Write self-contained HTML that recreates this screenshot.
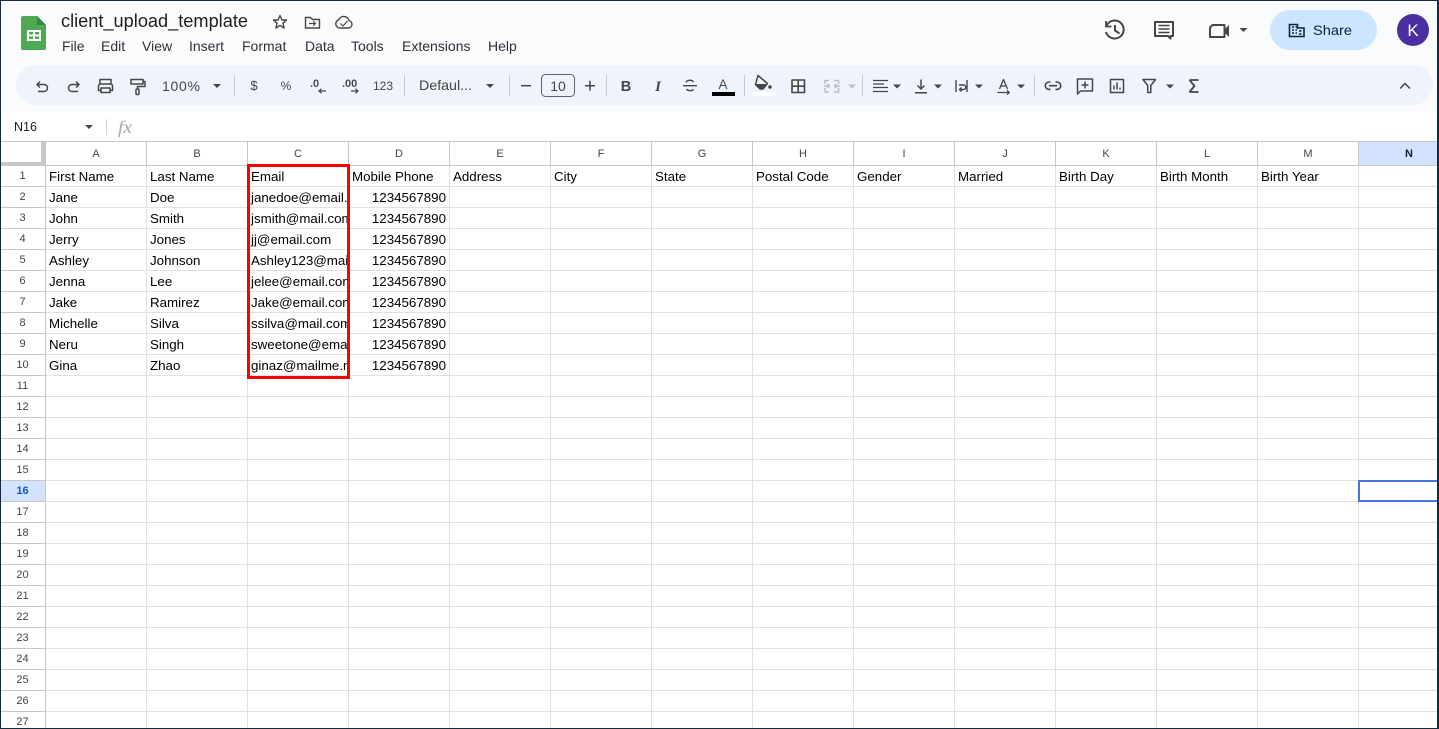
<!DOCTYPE html>
<html lang="en"><head><meta charset="utf-8"><title>client_upload_template</title>
<style>
html,body{margin:0;padding:0;background:#fff}
#w{position:relative;width:1439px;height:729px;overflow:hidden;background:#fff;font-family:"Liberation Sans",Arial,sans-serif}
#top{position:absolute;left:0;top:0;width:1439px;height:112px;background:#fafbfd}
#ui{position:absolute;left:0;top:0}
#ui text{font-family:"Liberation Sans",Arial,sans-serif}
#fb{position:absolute;left:0;top:112px;width:1439px;height:29px;background:#fff}
table{position:absolute;left:0;top:141px;border-collapse:separate;border-spacing:0;table-layout:fixed;width:1460px;font-size:13.33px;color:#000}
col.h{width:46px}col.c{width:101px}
td,th{box-sizing:border-box;height:21px;padding:0 3px;border-right:1px solid #e1e1e1;border-bottom:1px solid #e1e1e1;overflow:hidden;white-space:nowrap;font-weight:normal;text-align:left;line-height:19px;vertical-align:middle}
thead th{height:25px;border-top:1px solid #c7c7c7;border-right:1px solid #c7c7c7;border-bottom:1px solid #c7c7c7;text-align:center;font-size:11px;color:#444;background:#fff;padding:2px 0 0}
tbody th{text-align:center;font-size:11px;color:#444;border-right:1px solid #c7c7c7;border-bottom:1px solid #c7c7c7;padding:1px 0 0;background:#fff}
td.n{text-align:right}
thead th.s{background:#d3e3fd;color:#0b1f49;font-weight:bold}
tbody th.s{background:#d3e3fd;color:#0b57d0;font-weight:bold}
#corner{position:absolute;left:0;top:142px;width:41px;height:20px;background:#fff;border-right:4px solid #c7c7c7;border-bottom:3px solid #c7c7c7}
#red{position:absolute;left:247px;top:164px;width:97px;height:209px;border:3px solid #f00}
#sel{position:absolute;left:1358px;top:480px;width:79px;height:18px;border:2px solid #4374e0;border-right:0}
#frame{position:absolute;left:0;top:0;width:1439px;height:729px;box-sizing:border-box;border:1px solid #16293d;border-right-width:2px;pointer-events:none}
</style></head><body><div id="w">
<div id="top"></div>
<div id="fb"></div>
<svg id="ui" width="1439" height="141" viewBox="0 0 1439 141" fill="none" stroke="none">
<!-- logo -->
<path d="M23 16H37L46 25V48a2 2 0 0 1-2 2H23a2 2 0 0 1-2-2V18a2 2 0 0 1 2-2Z" fill="#4fa953"/>
<path d="M37 16L46 25H37Z" fill="#2f8a43"/>
<path d="M27 30H41V41H27Z" fill="#fff"/>
<path d="M29 32H33V34.5H29ZM35 32H39V34.5H35ZM29 36.5H33V39H29ZM35 36.5H39V39H35Z" fill="#4fa953"/>
<text x="61" y="27" font-size="18" fill="#1f1f1f" textLength="187" lengthAdjust="spacingAndGlyphs">client_upload_template</text>
<g font-size="14" fill="#303134">
<text x="62" y="51">File</text><text x="101" y="51">Edit</text><text x="142" y="51">View</text><text x="189" y="51">Insert</text><text x="242" y="51">Format</text><text x="305" y="51">Data</text><text x="351" y="51">Tools</text><text x="402" y="51">Extensions</text><text x="488" y="51">Help</text>
</g>
<g stroke="#444746" stroke-width="1.4" stroke-linejoin="round">
<path d="M280 15.5L281.9 20H286.6L282.9 23.2L284.1 28L280 25.4L275.9 28L277.1 23.2L273.4 20H278.1Z"/>
<path d="M305.5 17.5H310.5L312.5 19.5H319.5V28H305.5Z"/>
<path d="M309 23.5H315.5M313.3 21.3L315.5 23.5L313.3 25.7" stroke-width="1.2"/>
<path d="M340 28H348.5a3.7 3.7 0 0 0 .6-7.3a5.5 5.5 0 0 0-10.4-.9A4.2 4.2 0 0 0 340 28Z"/>
<path d="M340.5 23.5L343 26L347.5 21" stroke-width="1.2"/>
</g>
<!-- right header -->
<g stroke="#444746" stroke-width="2">
<path d="M1106.6 25.5A9 9 0 1 1 1106 32"/>
<path d="M1106 21V26.5H1111.5" stroke-width="1.8"/>
<path d="M1115 25V30.5L1119.5 33.5"/>
<path d="M1155 22H1173V36H1170.5V38.5L1168 36H1155Z" stroke-linejoin="round"/>
<path d="M1158.5 25.5H1169.5M1158.5 29H1169.5M1158.5 32.5H1169.5" stroke-width="1.6"/>
<path d="M1212.5 25H1224.5V37H1210V27.5Z" stroke-linejoin="round"/>
</g>
<path d="M1224.5 29.5L1229 25V37L1224.5 32.5Z" fill="#444746"/>
<path d="M1239.5 28H1247.5L1243.5 32Z" fill="#444746"/>
<rect x="1270" y="10" width="107" height="40" rx="20" fill="#cbe6fe"/>
<path d="M1289.5 24.5V36.5H1304V28H1297.5V24.5ZM1292 27H1294M1292 30H1294M1292 33H1294M1295.5 27H1297M1295.5 30H1297M1295.5 33H1297M1299 31H1301.5M1299 34H1301.5" stroke="#0b2240" stroke-width="1.6"/>
<text x="1313" y="35" font-size="14" font-weight="500" fill="#0b2240" textLength="39" lengthAdjust="spacingAndGlyphs">Share</text>
<circle cx="1413" cy="30" r="16" fill="#4a2fa0"/>
<text x="1413" y="36" text-anchor="middle" font-size="17" fill="#fff">K</text>
<!-- toolbar -->
<rect x="16" y="65" width="1417" height="40" rx="20" fill="#eff3fb"/>
<g stroke="#c7cbd1" stroke-width="1">
<path d="M234.5 75V96M404.5 75V96M509.5 75V96M606.5 75V96M744.5 75V96M862.5 75V96M1034.5 75V96"/>
</g>
<g stroke="#444746" stroke-width="1.5" stroke-linejoin="round">
<path d="M40 81.5L37 84.5L40 87.5M37.5 84.5H44a3.5 3.5 0 0 1 0 7H38"/>
<path d="M76 81.5L79 84.5L76 87.5M78.5 84.5H72a3.5 3.5 0 0 0 0 7H78"/>
<path d="M100 83.5V79.5H111V83.5"/>
<path d="M101 90.5H98.5V86a2 2 0 0 1 2-2H110.5a2 2 0 0 1 2 2V90.5H110"/>
<path d="M101 88H110V92.5H101Z"/>
<rect x="131" y="79.5" width="12" height="4.5"/>
<path d="M143 81.5H145V86.5H137.5V89"/>
<rect x="136" y="89" width="3" height="5.5" rx="1"/>
<path d="M521 85.7H531" />
<path d="M585 85.7H595M590 80.7V90.7"/>
<path d="M683 85.7H697M686 82.5a4 3 0 0 1 7.5-.5M686.5 89a4 3 0 0 0 7 .3" stroke-width="1.4"/>
<rect x="792" y="80" width="12.5" height="12.5" stroke-width="1.6"/>
<path d="M792 86.2H804.5M798.2 80V92.5" stroke-width="1.6"/>
<path d="M873 80.5H888M873 84H884M873 87.5H888M873 91.5H888" stroke-width="1.3"/>
<path d="M921 79.5V89M917.5 85.5L921 89L924.5 85.5M915 92.7H927" stroke-width="1.5"/>
<path d="M956 80V92M967 80V92M959 85H963.5a2 2 0 0 1 0 4.5H960M961.5 87.5L959.5 89.5L961.5 91.5" stroke-width="1.4"/>
<path d="M999.5 89L1003.5 79.5L1007.5 89M1001 86H1006" stroke-width="1.3"/>
<path d="M997.5 92.5H1009M1007 90.3L1009.3 92.5L1007 94.7" stroke-width="1.3"/>
<path d="M1050.5 82H1049a3.7 3.7 0 0 0 0 7.4H1050.5M1055.5 82H1057a3.7 3.7 0 0 1 0 7.4H1055.5M1049 85.7H1057" stroke-width="1.6"/>
<path d="M1077.5 79H1092.5V91H1080.5L1077.5 94Z" stroke-width="1.5"/>
<path d="M1085 81.5V88.5M1081.5 85H1088.5" stroke-width="1.5"/>
<rect x="1110.5" y="79.5" width="13" height="13" stroke-width="1.5"/>
<path d="M1114 89.5V85.5M1117 89.5V82.5M1120 89.5V87.5" stroke-width="1.5"/>
<path d="M1143 79.5H1155.5L1150.8 85.5V92.5H1147.7V85.5Z" stroke-width="1.5"/>
<path d="M1189.5 80H1198.5M1189.5 92H1198.5M1189.5 80L1194.5 86L1189.5 92" stroke-width="1.8"/>
<path d="M1400 88.5L1405 83.5L1410 88.5" stroke-width="1.5"/>
</g>
<rect x="541.5" y="74.5" width="33" height="22" rx="4" stroke="#5f6368" stroke-width="1"/>
<rect x="712" y="92" width="23" height="4" fill="#000"/>
<g fill="#444746">
<path d="M213 84H221L217 88Z"/><path d="M486 84H494L490 88Z"/>
<path d="M893 84.5H901L897 88.5Z"/><path d="M934 84.5H942L938 88.5Z"/><path d="M975 84.5H983L979 88.5Z"/><path d="M1017 84.5H1025L1021 88.5Z"/><path d="M1166 84.5H1174L1170 88.5Z"/>
<text x="181" y="91" font-size="14" text-anchor="middle" textLength="38">100%</text>
<text x="254" y="90" font-size="13" text-anchor="middle">$</text>
<text x="286" y="90" font-size="12" text-anchor="middle">%</text>
<text x="310" y="87" font-size="11" font-weight="bold">.0</text>
<text x="342" y="87" font-size="11" font-weight="bold">.00</text>
<text x="383" y="90" font-size="12" text-anchor="middle">123</text>
<text x="419" y="90" font-size="14" textLength="53" lengthAdjust="spacingAndGlyphs">Defaul...</text>
<text x="558" y="91" font-size="14" text-anchor="middle">10</text>
<text x="626" y="91" font-size="14.5" font-weight="bold" text-anchor="middle">B</text>
<text x="658" y="91" font-size="15" font-weight="bold" font-style="italic" text-anchor="middle" style="font-family:'Liberation Serif',serif">I</text>
<text x="723" y="89" font-size="13.5" text-anchor="middle">A</text>
</g>
<path d="M319 91H326M321.5 88.7L319 91L321.5 93.3M351 91H358M355.5 88.7L358 91L355.5 93.3" stroke="#444746" stroke-width="1.2"/>
<!-- fill colour -->
<path d="M758 75.5L767.5 83.5L763 89H760L755.5 84.5Z" stroke="#444746" stroke-width="1.5" stroke-linejoin="round"/>
<path d="M755.5 84L766.5 84L763 88.5H760Z" fill="#444746"/>
<circle cx="770" cy="87" r="1.8" fill="#444746"/>
<rect x="753" y="92" width="23" height="4" fill="#fff"/>
<!-- merge -->
<g stroke="#b9bdc3" stroke-width="1.5">
<path d="M829 80.5H825V84M825 88V92H829M834 80.5H838.5V84M838.5 88V92H834M824 86H829.5M827.5 84L829.5 86L827.5 88M840 86H834.5M836.5 84L834.5 86L836.5 88"/>
</g>
<path d="M848 84.5H856L852 88.5Z" fill="#b9bdc3"/>
<!-- formula bar -->
<text x="14" y="131" font-size="12.5" fill="#1f1f1f">N16</text>
<path d="M85 125H93L89 129Z" fill="#444746"/>
<path d="M106.5 119V135" stroke="#d4d4d4"/>
<text x="118" y="133" font-size="18" font-style="italic" fill="#a8a8a8" style="font-family:'Liberation Serif',serif" textLength="14" lengthAdjust="spacingAndGlyphs">fx</text>
</svg>
<table><colgroup><col class="h"><col class="c"><col class="c"><col class="c"><col class="c"><col class="c"><col class="c"><col class="c"><col class="c"><col class="c"><col class="c"><col class="c"><col class="c"><col class="c"><col class="c"></colgroup>
<thead><tr><th></th><th>A</th><th>B</th><th>C</th><th>D</th><th>E</th><th>F</th><th>G</th><th>H</th><th>I</th><th>J</th><th>K</th><th>L</th><th>M</th><th class="s">N</th></tr></thead>
<tbody>
<tr><th>1</th><td>First Name</td><td>Last Name</td><td>Email</td><td>Mobile Phone</td><td>Address</td><td>City</td><td>State</td><td>Postal Code</td><td>Gender</td><td>Married</td><td>Birth Day</td><td>Birth Month</td><td>Birth Year</td><td></td></tr>
<tr><th>2</th><td>Jane</td><td>Doe</td><td>janedoe@email.com</td><td class="n">1234567890</td><td></td><td></td><td></td><td></td><td></td><td></td><td></td><td></td><td></td><td></td></tr>
<tr><th>3</th><td>John</td><td>Smith</td><td>jsmith@mail.com</td><td class="n">1234567890</td><td></td><td></td><td></td><td></td><td></td><td></td><td></td><td></td><td></td><td></td></tr>
<tr><th>4</th><td>Jerry</td><td>Jones</td><td>jj@email.com</td><td class="n">1234567890</td><td></td><td></td><td></td><td></td><td></td><td></td><td></td><td></td><td></td><td></td></tr>
<tr><th>5</th><td>Ashley</td><td>Johnson</td><td>Ashley123@mail.com</td><td class="n">1234567890</td><td></td><td></td><td></td><td></td><td></td><td></td><td></td><td></td><td></td><td></td></tr>
<tr><th>6</th><td>Jenna</td><td>Lee</td><td>jelee@email.com</td><td class="n">1234567890</td><td></td><td></td><td></td><td></td><td></td><td></td><td></td><td></td><td></td><td></td></tr>
<tr><th>7</th><td>Jake</td><td>Ramirez</td><td>Jake@email.com</td><td class="n">1234567890</td><td></td><td></td><td></td><td></td><td></td><td></td><td></td><td></td><td></td><td></td></tr>
<tr><th>8</th><td>Michelle</td><td>Silva</td><td>ssilva@mail.com</td><td class="n">1234567890</td><td></td><td></td><td></td><td></td><td></td><td></td><td></td><td></td><td></td><td></td></tr>
<tr><th>9</th><td>Neru</td><td>Singh</td><td>sweetone@email.com</td><td class="n">1234567890</td><td></td><td></td><td></td><td></td><td></td><td></td><td></td><td></td><td></td><td></td></tr>
<tr><th>10</th><td>Gina</td><td>Zhao</td><td>ginaz@mailme.net</td><td class="n">1234567890</td><td></td><td></td><td></td><td></td><td></td><td></td><td></td><td></td><td></td><td></td></tr>
<tr><th>11</th><td></td><td></td><td></td><td></td><td></td><td></td><td></td><td></td><td></td><td></td><td></td><td></td><td></td><td></td></tr>
<tr><th>12</th><td></td><td></td><td></td><td></td><td></td><td></td><td></td><td></td><td></td><td></td><td></td><td></td><td></td><td></td></tr>
<tr><th>13</th><td></td><td></td><td></td><td></td><td></td><td></td><td></td><td></td><td></td><td></td><td></td><td></td><td></td><td></td></tr>
<tr><th>14</th><td></td><td></td><td></td><td></td><td></td><td></td><td></td><td></td><td></td><td></td><td></td><td></td><td></td><td></td></tr>
<tr><th>15</th><td></td><td></td><td></td><td></td><td></td><td></td><td></td><td></td><td></td><td></td><td></td><td></td><td></td><td></td></tr>
<tr><th class="s">16</th><td></td><td></td><td></td><td></td><td></td><td></td><td></td><td></td><td></td><td></td><td></td><td></td><td></td><td></td></tr>
<tr><th>17</th><td></td><td></td><td></td><td></td><td></td><td></td><td></td><td></td><td></td><td></td><td></td><td></td><td></td><td></td></tr>
<tr><th>18</th><td></td><td></td><td></td><td></td><td></td><td></td><td></td><td></td><td></td><td></td><td></td><td></td><td></td><td></td></tr>
<tr><th>19</th><td></td><td></td><td></td><td></td><td></td><td></td><td></td><td></td><td></td><td></td><td></td><td></td><td></td><td></td></tr>
<tr><th>20</th><td></td><td></td><td></td><td></td><td></td><td></td><td></td><td></td><td></td><td></td><td></td><td></td><td></td><td></td></tr>
<tr><th>21</th><td></td><td></td><td></td><td></td><td></td><td></td><td></td><td></td><td></td><td></td><td></td><td></td><td></td><td></td></tr>
<tr><th>22</th><td></td><td></td><td></td><td></td><td></td><td></td><td></td><td></td><td></td><td></td><td></td><td></td><td></td><td></td></tr>
<tr><th>23</th><td></td><td></td><td></td><td></td><td></td><td></td><td></td><td></td><td></td><td></td><td></td><td></td><td></td><td></td></tr>
<tr><th>24</th><td></td><td></td><td></td><td></td><td></td><td></td><td></td><td></td><td></td><td></td><td></td><td></td><td></td><td></td></tr>
<tr><th>25</th><td></td><td></td><td></td><td></td><td></td><td></td><td></td><td></td><td></td><td></td><td></td><td></td><td></td><td></td></tr>
<tr><th>26</th><td></td><td></td><td></td><td></td><td></td><td></td><td></td><td></td><td></td><td></td><td></td><td></td><td></td><td></td></tr>
<tr><th>27</th><td></td><td></td><td></td><td></td><td></td><td></td><td></td><td></td><td></td><td></td><td></td><td></td><td></td><td></td></tr>
</tbody></table>
<div id="corner"></div>
<div id="red"></div>
<div id="sel"></div>
<div id="frame"></div>
</div></body></html>
